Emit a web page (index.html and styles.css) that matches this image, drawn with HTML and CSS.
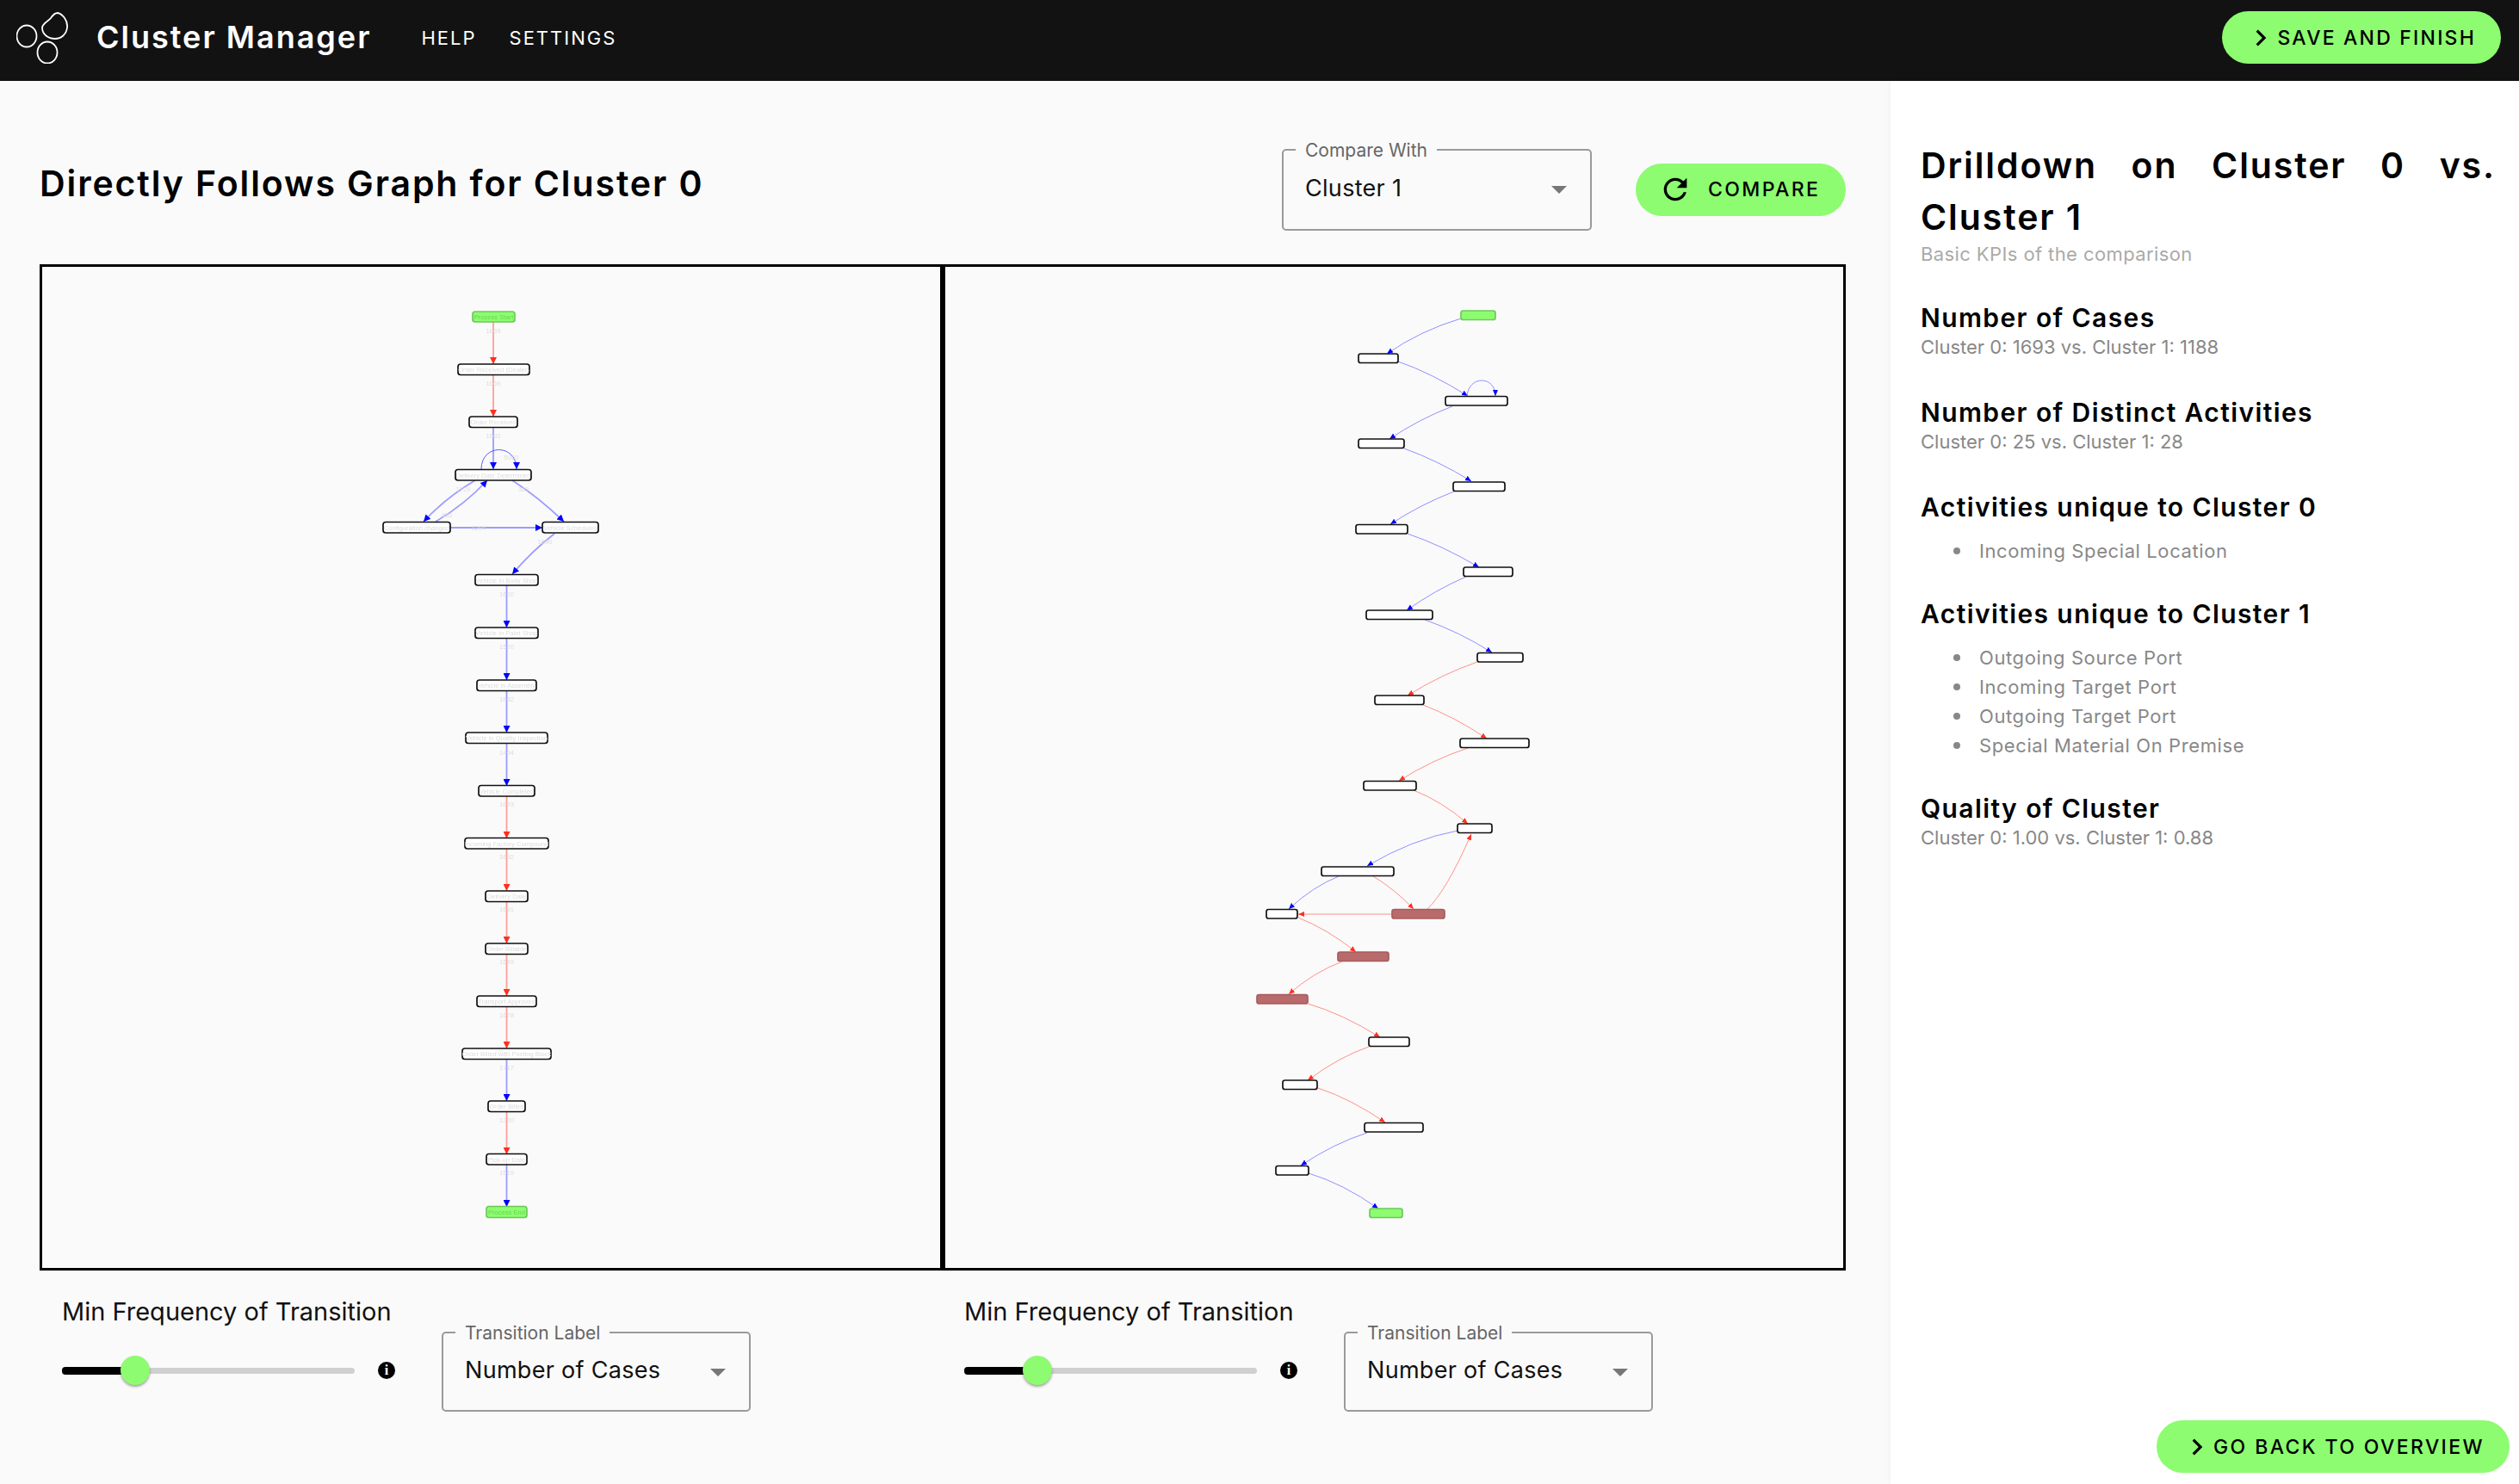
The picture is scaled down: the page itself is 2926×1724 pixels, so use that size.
FILE: index.html
```html
<!DOCTYPE html>
<html lang="en">
  <head>
    <meta charset="UTF-8" />
    <title>Cluster Manager</title>
    <link rel="stylesheet" href="styles.css">
  </head>
  <body>
    <header class="topbar">
      <svg class="logo" viewBox="0 0 60 60" fill="none" stroke="#fff" stroke-width="1.8">
        <ellipse cx="12" cy="28" rx="11.5" ry="12.5" />
        <ellipse cx="36" cy="47" rx="11.5" ry="12.5" />
        <path d="M48 1C53 2 60 9 59 18C58 26 52 31 45 31C37 31 30 26 30 18C31 12 37 11 40 7C42 4 44 1 48 1Z" />
      </svg>
      <span class="brand">Cluster Manager</span>
      <nav class="nav">
        <a>HELP</a>
        <a>SETTINGS</a>
      </nav>
      <button class="pill pill-save">
        <svg class="chev" viewBox="0 0 24 24"><path d="M10 6L8.59 7.41 13.17 12l-4.58 4.59L10 18l6-6z" /></svg>
        SAVE AND FINISH
      </button>
    </header>

    <div class="page">
      <main class="main">
        <div class="title-row">
          <h1 class="title">Directly Follows Graph for Cluster 0</h1>
          <div class="select select-compare">
            <span class="select-label">Compare With</span>
            <span class="select-value">Cluster 1</span>
            <i class="caret"></i>
          </div>
          <button class="pill pill-compare">
            <svg class="refresh" viewBox="0 0 24 24"><path d="M17.65 6.35C16.2 4.9 14.21 4 12 4c-4.42 0-7.99 3.58-7.99 8s3.57 8 7.99 8c3.73 0 6.84-2.55 7.73-6h-2.08c-.82 2.33-3.04 4-5.65 4-3.31 0-6-2.69-6-6s2.69-6 6-6c1.66 0 3.14.69 4.22 1.78L13 11h7V4l-2.35 2.35z" /></svg>
            COMPARE
          </button>
        </div>

        <div class="graphs">
          <div class="graph">
            <svg viewBox="49 310 1043 1163">
              <defs>
                <marker id="ab" markerUnits="userSpaceOnUse" markerWidth="9" markerHeight="8" refX="8" refY="4" orient="auto"><path d="M0 0L8 4L0 8Z" fill="#0000ff" /></marker>
                <marker id="ar" markerUnits="userSpaceOnUse" markerWidth="9" markerHeight="8" refX="8" refY="4" orient="auto"><path d="M0 0L8 4L0 8Z" fill="#ff2f20" /></marker>
                <marker id="ab-small" markerUnits="userSpaceOnUse" markerWidth="8" markerHeight="7" refX="7" refY="3" orient="auto"><path d="M0 0L7 3L0 6Z" fill="#0000ff" /></marker>
                <marker id="ar-small" markerUnits="userSpaceOnUse" markerWidth="8" markerHeight="7" refX="7" refY="3" orient="auto"><path d="M0 0L7 3L0 6Z" fill="#ff2f20" /></marker>
              </defs>
              <g class="edges">
                <path class="red" d="M573 374V423" />
                <path class="red" d="M573 436V484" />
                <path class="blue" d="M573 497V545" />
                <path class="blue strong" d="M559 545C559 515 600 515 600 545" />
                <path class="blue" d="M552 558Q518 578 492 606" />
                <path class="blue" d="M506 606Q540 586 566 558" />
                <path class="blue" d="M595 558Q626 578 655 606" />
                <path class="blue" d="M523 613H630" />
                <path class="blue" d="M644 620Q618 640 595 667" />
                <path class="blue" d="M588.5 680V729" />
                <path class="blue" d="M588.5 741V790" />
                <path class="blue" d="M588.5 802V851" />
                <path class="blue" d="M588.5 863V913" />
                <path class="red" d="M588.5 925V974" />
                <path class="red" d="M588.5 986V1035" />
                <path class="red" d="M588.5 1047V1096" />
                <path class="red" d="M588.5 1108V1157" />
                <path class="red" d="M588.5 1169V1218" />
                <path class="blue" d="M588.5 1230V1279" />
                <path class="red" d="M588.5 1291V1341" />
                <path class="blue" d="M588.5 1353V1402" />
              </g>
              <g class="edge-labels">
                <text x="573" y="387">1659</text>
                <text x="573" y="448">1659</text>
                <text x="573" y="509">1692</text>
                <text x="594" y="534">5060</text>
                <text x="538" y="571">1729</text>
                <text x="519" y="601">455</text>
                <text x="608" y="571">369</text>
                <text x="556" y="616">1294</text>
                <text x="633" y="632">1690</text>
                <text x="588.5" y="693">1620</text>
                <text x="588.5" y="754">1520</text>
                <text x="588.5" y="815">1632</text>
                <text x="588.5" y="877">1464</text>
                <text x="588.5" y="937">1693</text>
                <text x="588.5" y="998">1692</text>
                <text x="588.5" y="1059">1691</text>
                <text x="588.5" y="1120">1549</text>
                <text x="588.5" y="1182">1678</text>
                <text x="588.5" y="1243">1717</text>
                <text x="588.5" y="1304">1320</text>
                <text x="588.5" y="1365">1519</text>
              </g>
              <g class="nodes">
                <g class="start"><rect x="549" y="362" width="49" height="12" rx="3" /><text x="573.5" y="371">Process Start</text></g>
                <g><rect x="532" y="423" width="83" height="12.5" rx="3" /><text x="573.5" y="432">Order Received (Dealer)</text></g>
                <g><rect x="545" y="484" width="56" height="12.5" rx="3" /><text x="573" y="493">Order Received</text></g>
                <g><rect x="529" y="545.5" width="88" height="12.5" rx="3" /><text x="573" y="555">Delivery Date Determined</text></g>
                <g><rect x="445" y="606.5" width="78" height="12.5" rx="3" /><text x="484" y="616">Configuration changed</text></g>
                <g><rect x="630" y="606.5" width="65" height="12.5" rx="3" /><text x="662.5" y="616">Vehicle Scheduled</text></g>
                <g><rect x="552" y="667.5" width="73" height="12.5" rx="3" /><text x="588.5" y="677">Vehicle in Body Shop</text></g>
                <g><rect x="552" y="729" width="73" height="12.5" rx="3" /><text x="588.5" y="738">Vehicle in Paint Shop</text></g>
                <g><rect x="554" y="790" width="69" height="12.5" rx="3" /><text x="588.5" y="799">Vehicle in Assembly</text></g>
                <g><rect x="541" y="851" width="95" height="12.5" rx="3" /><text x="588.5" y="860">Vehicle in Quality Inspection</text></g>
                <g><rect x="556" y="912.5" width="65" height="12.5" rx="3" /><text x="588.5" y="922">Vehicle Completed</text></g>
                <g><rect x="540" y="973.5" width="97" height="12.5" rx="3" /><text x="588.5" y="983">Incoming Factory Compound</text></g>
                <g><rect x="564" y="1035" width="49" height="12.5" rx="3" /><text x="588.5" y="1044">Delivery Date</text></g>
                <g><rect x="564" y="1096" width="49" height="12.5" rx="3" /><text x="588.5" y="1105">Order Billable</text></g>
                <g><rect x="554" y="1157" width="69" height="12.5" rx="3" /><text x="588.5" y="1166">Transport Approved</text></g>
                <g><rect x="537" y="1218" width="103" height="12.5" rx="3" /><text x="588.5" y="1227">Order Billed with Posting Block</text></g>
                <g><rect x="567" y="1279" width="43" height="12.5" rx="3" /><text x="588.5" y="1288">Order Billed</text></g>
                <g><rect x="565" y="1340.5" width="47" height="12.5" rx="3" /><text x="588.5" y="1350">Pick-up Date</text></g>
                <g class="start"><rect x="565" y="1401.5" width="47" height="13" rx="3" /><text x="588.5" y="1411">Process End</text></g>
              </g>
            </svg>
          </div>

          <div class="graph">
            <svg viewBox="1098 310 1043 1163">
              <g class="edges thin">
                <path class="blue" d="M1697 370Q1650 384 1611 411" />
                <path class="blue" d="M1624 420Q1662 433 1705 460" />
                <path class="blue strong" d="M1704 460C1706 436 1737 436 1737 460" />
                <path class="blue" d="M1687 472Q1648 487 1614 510" />
                <path class="blue" d="M1631 521Q1670 535 1709 559" />
                <path class="blue" d="M1689 571Q1650 586 1615 609" />
                <path class="blue" d="M1635 620Q1676 634 1718 659" />
                <path class="blue" d="M1703 670Q1666 686 1634 709" />
                <path class="blue" d="M1655 720Q1695 734 1733 758" />
                <path class="red" d="M1716 769Q1675 783 1635 808" />
                <path class="red" d="M1653 819Q1690 833 1727 858" />
                <path class="red" d="M1705 869Q1665 882 1625 907" />
                <path class="red" d="M1642 918Q1675 931 1705 957" />
                <path class="blue" d="M1693 965Q1640 975 1588 1006" />
                <path class="blue" d="M1555 1018Q1525 1030 1497 1056" />
                <path class="red" d="M1595 1018Q1620 1033 1642 1056" />
                <path class="red" d="M1658 1056Q1680 1035 1709 969" />
                <path class="red" d="M1617 1062H1508" />
                <path class="red" d="M1508 1066Q1543 1080 1575 1106" />
                <path class="red" d="M1559 1117Q1525 1130 1497 1155" />
                <path class="red" d="M1519 1166Q1560 1178 1603 1205" />
                <path class="red" d="M1590 1216Q1555 1228 1519 1255" />
                <path class="red" d="M1531 1264Q1570 1277 1609 1304" />
                <path class="blue" d="M1588 1316Q1550 1328 1511 1354" />
                <path class="blue" d="M1520 1363Q1560 1375 1601 1404" />
              </g>
              <g class="nodes">
                <g class="start"><rect x="1697" y="361" width="40" height="10.5" rx="2.5" /></g>
                <g><rect x="1578" y="411" width="46" height="10.5" rx="2.5" /></g>
                <g><rect x="1679" y="460.5" width="72" height="10.5" rx="2.5" /></g>
                <g><rect x="1578" y="510" width="53" height="10.5" rx="2.5" /></g>
                <g><rect x="1688" y="560" width="60" height="10.5" rx="2.5" /></g>
                <g><rect x="1575" y="609.5" width="60" height="10.5" rx="2.5" /></g>
                <g><rect x="1700" y="659" width="57" height="10.5" rx="2.5" /></g>
                <g><rect x="1587" y="709" width="77" height="10.5" rx="2.5" /></g>
                <g><rect x="1716" y="758.5" width="53" height="10.5" rx="2.5" /></g>
                <g><rect x="1597" y="808" width="57" height="10.5" rx="2.5" /></g>
                <g><rect x="1696" y="858" width="80" height="10.5" rx="2.5" /></g>
                <g><rect x="1584" y="907.5" width="61" height="10.5" rx="2.5" /></g>
                <g><rect x="1693" y="957" width="40" height="10.5" rx="2.5" /></g>
                <g><rect x="1535" y="1007" width="84" height="10.5" rx="2.5" /></g>
                <g><rect x="1471" y="1056.5" width="36" height="10.5" rx="2.5" /></g>
                <g class="hot"><rect x="1617" y="1056.5" width="61" height="10.5" rx="2.5" /></g>
                <g class="hot"><rect x="1554" y="1106" width="59" height="10.5" rx="2.5" /></g>
                <g class="hot"><rect x="1460" y="1155.5" width="59" height="10.5" rx="2.5" /></g>
                <g><rect x="1590" y="1205" width="47" height="10.5" rx="2.5" /></g>
                <g><rect x="1490" y="1255" width="40" height="10.5" rx="2.5" /></g>
                <g><rect x="1585" y="1304.5" width="68" height="10.5" rx="2.5" /></g>
                <g><rect x="1482" y="1354.5" width="38" height="10.5" rx="2.5" /></g>
                <g class="start"><rect x="1591" y="1404" width="38" height="10.5" rx="2.5" /></g>
              </g>
            </svg>
          </div>
        </div>

        <div class="controls">
          <div class="control">
            <div class="slider-col">
              <div class="slider-label">Min Frequency of Transition</div>
              <div class="slider-row">
                <div class="track"><div class="track-fill"></div><div class="thumb"></div></div>
                <i class="info">i</i>
              </div>
            </div>
            <div class="select select-label-type">
              <span class="select-label">Transition Label</span>
              <span class="select-value">Number of Cases</span>
              <i class="caret"></i>
            </div>
          </div>
          <div class="control">
            <div class="slider-col">
              <div class="slider-label">Min Frequency of Transition</div>
              <div class="slider-row">
                <div class="track"><div class="track-fill"></div><div class="thumb"></div></div>
                <i class="info">i</i>
              </div>
            </div>
            <div class="select select-label-type">
              <span class="select-label">Transition Label</span>
              <span class="select-value">Number of Cases</span>
              <i class="caret"></i>
            </div>
          </div>
        </div>
      </main>

      <aside class="side">
        <div class="side-body">
          <h2 class="side-title">Drilldown on Cluster 0 vs. Cluster 1</h2>
          <p class="side-sub">Basic KPIs of the comparison</p>

          <section class="kpi kpi-first">
            <h3>Number of Cases</h3>
            <p>Cluster 0: 1693 vs. Cluster 1: 1188</p>
          </section>
          <section class="kpi">
            <h3>Number of Distinct Activities</h3>
            <p>Cluster 0: 25 vs. Cluster 1: 28</p>
          </section>
          <section class="kpi">
            <h3>Activities unique to Cluster 0</h3>
            <ul>
              <li>Incoming Special Location</li>
            </ul>
          </section>
          <section class="kpi">
            <h3>Activities unique to Cluster 1</h3>
            <ul>
              <li>Outgoing Source Port</li>
              <li>Incoming Target Port</li>
              <li>Outgoing Target Port</li>
              <li>Special Material On Premise</li>
            </ul>
          </section>
          <section class="kpi">
            <h3>Quality of Cluster</h3>
            <p>Cluster 0: 1.00 vs. Cluster 1: 0.88</p>
          </section>
        </div>
        <button class="pill pill-back">
          <svg class="chev" viewBox="0 0 24 24"><path d="M10 6L8.59 7.41 13.17 12l-4.58 4.59L10 18l6-6z" /></svg>
          GO BACK TO OVERVIEW
        </button>
      </aside>
    </div>
  </body>
</html>
```

FILE: styles.css
```css
* {
  box-sizing: border-box;
}
body {
  margin: 0;
  height: 1724px;
  overflow: hidden;
  display: flex;
  flex-direction: column;
  font-family: Inter, "Open Sans", sans-serif;
  background: #fafafa;
  color: #000;
}

/* top bar */
.topbar {
  height: 94px;
  flex: none;
  display: flex;
  align-items: center;
  padding: 0 21px 7px 19px;
  background: #121212;
  color: #fff;
}
.logo {
  width: 60px;
  height: 60px;
  flex: none;
}
.brand {
  margin-left: 33px;
  margin-top: -2px;
  font-size: 36px;
  font-weight: 600;
  letter-spacing: 2px;
}
.nav {
  display: flex;
  gap: 38px;
  margin-left: 58px;
  font-size: 22px;
  letter-spacing: 2px;
}

/* green buttons */
.pill {
  display: flex;
  align-items: center;
  height: 61px;
  border: none;
  border-radius: 31px;
  background: #8dfc70;
  color: #000;
  font-family: inherit;
  font-size: 23px;
  font-weight: 500;
  letter-spacing: 2.4px;
  white-space: nowrap;
}
.pill svg {
  flex: none;
}
.chev {
  width: 38px;
  height: 38px;
}
.pill-save {
  margin-left: auto;
  padding: 0 29px 0 26px;
  letter-spacing: 2.2px;
}
.pill-compare {
  width: 244px;
  padding: 0 0 2px 26px;
}
.refresh {
  width: 40px;
  height: 40px;
  margin-right: 18px;
}
.pill-back {
  align-self: flex-end;
  margin: auto 11px 13px 0;
  padding: 0 29px 0 28px;
}

/* main column */
.page {
  flex: 1;
  display: flex;
  min-height: 0;
}
.main {
  width: 2196px;
  padding: 79px 52px 0 46px;
}
.title-row {
  display: flex;
  align-items: center;
  height: 95px;
  margin-bottom: 39px;
}
.title {
  margin: -16px 0 0;
  flex: 1;
  font-size: 41px;
  font-weight: 600;
  letter-spacing: 1.9px;
}

/* outlined select */
.select {
  position: relative;
  flex: none;
  border: 2px solid #9a9a9a;
  border-radius: 5px;
}
.select-compare {
  width: 360px;
  height: 95px;
  margin-right: 51px;
}
.select-compare .select-value {
  top: 26px;
}
.select-label-type {
  width: 359px;
  height: 93px;
  margin-top: 41px;
}
.select-label {
  position: absolute;
  top: -13px;
  left: 14px;
  padding: 0 11px;
  background: #fafafa;
  color: #666;
  font-size: 21px;
  line-height: 26px;
}
.select-value {
  position: absolute;
  left: 25px;
  top: 25px;
  font-size: 27px;
  line-height: 36px;
  letter-spacing: 0.3px;
  color: #111;
}
.caret {
  position: absolute;
  right: 27px;
  top: 41px;
  border-left: 9px solid transparent;
  border-right: 9px solid transparent;
  border-top: 9px solid #777;
}

/* graph panels */
.graphs {
  display: flex;
  height: 1169px;
}
.graph {
  flex: 1;
  border: 3px solid #000;
}
.graph svg {
  display: block;
  width: 100%;
  height: 100%;
  filter: blur(0.35px);
}
.edges path {
  fill: none;
  stroke-width: 1.8;
}
.edges .blue {
  stroke: #9c9cff;
  marker-end: url(#ab);
}
.edges .red {
  stroke: #ff9f98;
  marker-end: url(#ar);
}
.edges .strong {
  stroke: #5a5aff;
  stroke-width: 1;
}
.edges.thin path {
  stroke-width: 1;
}
.edges.thin .blue {
  stroke: #8f8fff;
  marker-end: url(#ab-small);
}
.edges.thin .red {
  stroke: #ff9087;
  marker-end: url(#ar-small);
}
.edge-labels text,
.nodes text {
  font-family: "Liberation Sans", Arial, sans-serif;
  font-size: 7.6px;
  text-anchor: middle;
  fill: #dcdcdc;
}
.nodes rect {
  fill: #fff;
  stroke: #111;
  stroke-width: 1.7;
}
.nodes .start rect {
  fill: #8dfc70;
  stroke: #6cc958;
}
.nodes .start text {
  fill: #67d750;
}
.nodes .hot rect {
  fill: #b96b6b;
  stroke: #a65c5c;
}

/* sliders under the graphs */
.controls {
  display: flex;
  padding-top: 30px;
}
.control {
  width: 1048px;
  flex: none;
  display: flex;
  padding-left: 26px;
}
.slider-col {
  width: 441px;
  flex: none;
}
.slider-label {
  font-size: 29px;
  line-height: 36px;
  color: #111;
}
.slider-row {
  display: flex;
  align-items: center;
  height: 34px;
  margin-top: 33px;
}
.track {
  position: relative;
  width: 340px;
  height: 7px;
  border-radius: 4px;
  background: #d0d0d0;
}
.track-fill {
  width: 85px;
  height: 9px;
  margin-top: -1px;
  border-radius: 4px 0 0 4px;
  background: #000;
}
.thumb {
  position: absolute;
  left: 68px;
  top: -14px;
  width: 34px;
  height: 34px;
  border-radius: 50%;
  background: #8dfc70;
  box-shadow: 0 2px 3px rgba(0, 0, 0, 0.35);
}
.info {
  width: 20px;
  height: 20px;
  margin-left: 27px;
  border-radius: 50%;
  background: #000;
  color: #fff;
  font-family: "Liberation Serif", serif;
  font-size: 16px;
  font-style: normal;
  font-weight: bold;
  line-height: 20px;
  text-align: center;
}

/* right drilldown */
.side {
  flex: 1;
  display: flex;
  flex-direction: column;
  background: #fff;
  box-shadow: 0 0 6px rgba(0, 0, 0, 0.06);
  padding: 68px 0 0 35px;
}
.side-body {
  padding-right: 27px;
}
.side-title {
  margin: 0;
  font-size: 41px;
  font-weight: 600;
  line-height: 60px;
  letter-spacing: 1.9px;
  text-align: justify;
}
.side-sub {
  margin: 0;
  font-size: 22px;
  line-height: 26px;
  letter-spacing: 0.4px;
  color: #aaa;
}
.kpi {
  margin-top: 41px;
}
.kpi-first {
  margin-top: 42px;
}
.kpi h3 {
  margin: 0;
  font-size: 30px;
  font-weight: 600;
  line-height: 38px;
  letter-spacing: 1.4px;
}
.kpi p {
  margin: 2px 0 0;
  padding-bottom: 3px;
  font-size: 22px;
  line-height: 26px;
  color: #888;
}
.kpi ul {
  margin: 19px 0 0;
  padding: 0 0 0 68px;
  list-style: none;
  font-size: 22px;
  line-height: 26px;
  letter-spacing: 0.6px;
  color: #888;
}
.kpi li {
  position: relative;
}
.kpi li::before {
  content: "";
  position: absolute;
  left: -30px;
  top: 9px;
  width: 8px;
  height: 8px;
  border-radius: 50%;
  background: #888;
}
.kpi li + li {
  margin-top: 8px;
}
```
